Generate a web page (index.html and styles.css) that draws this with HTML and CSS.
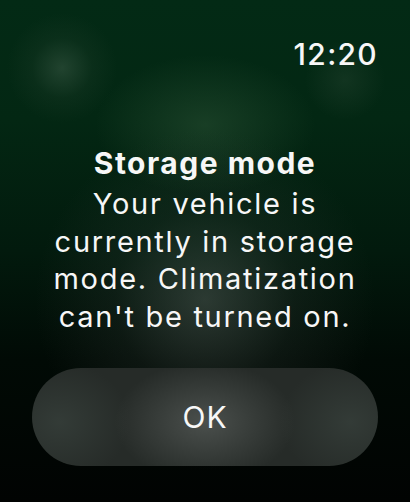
FILE: index.html
```html
<!DOCTYPE html>
<html lang="en">
<head>
    <meta charset="UTF-8">
    <meta name="viewport" content="width=device-width, initial-scale=1.0">
    <title>Storage mode</title>
    <link rel="stylesheet" href="styles.css">
</head>
<body>
    <div class="screen">
        <div class="status-bar">
            <span class="clock">12:20</span>
        </div>
        <div class="alert">
            <h1 class="alert-title">Storage mode</h1>
            <p class="alert-message">Your vehicle is currently in storage mode. Climatization can't be turned on.</p>
        </div>
        <div class="actions">
            <button class="ok-button">OK</button>
        </div>
    </div>
</body>
</html>
```

FILE: styles.css
```css
html, body {
    margin: 0;
    padding: 0;
    background-color: #010603;
}
.screen {
    width: 410px;
    height: 502px;
    overflow: hidden;
    color: #f7f7f7;
    font-family: Inter, "Noto Sans", sans-serif;
    display: flex;
    flex-direction: column;
    background:
        radial-gradient(circle at 205px 300px, rgba(95, 105, 100, 0.45) 0, rgba(60, 70, 65, 0.2) 90px, rgba(0, 0, 0, 0) 170px),
        radial-gradient(circle at 62px 68px, rgba(70, 100, 80, 0.45) 0, rgba(40, 70, 50, 0.2) 30px, rgba(0, 0, 0, 0) 55px),
        radial-gradient(ellipse 110px 70px at 205px 125px, rgba(45, 85, 55, 0.5) 0, rgba(0, 0, 0, 0) 100%),
        radial-gradient(circle at 345px 80px, rgba(45, 75, 55, 0.35) 0, rgba(0, 0, 0, 0) 40px),
        linear-gradient(180deg, #032a15 0, #032713 120px, #021a0d 250px, #010a05 360px, #010302 502px);
}
.status-bar {
    display: flex;
    justify-content: flex-end;
    padding: 39px 32px 0 0;
}
.clock {
    font-size: 30px;
    line-height: 30px;
    font-weight: 500;
    letter-spacing: 1.3px;
}
.alert {
    text-align: center;
    padding: 0 30px;
}
.alert-title {
    margin: 79px 0 0;
    font-size: 30px;
    line-height: 30px;
    font-weight: 700;
    letter-spacing: 1.5px;
}
.alert-message {
    margin: 7px 0 0;
    font-size: 29px;
    line-height: 37.5px;
    font-weight: 400;
    letter-spacing: 1.7px;
}
.actions {
    padding: 0 32px;
    margin-top: 33px;
}
.ok-button {
    width: 100%;
    height: 98px;
    border: none;
    border-radius: 49px;
    color: #f7f7f7;
    font-family: Inter, "Noto Sans", sans-serif;
    font-size: 30px;
    font-weight: 400;
    letter-spacing: 1px;
    background:
        radial-gradient(ellipse 90px 60px at 50% 55%, rgba(90, 95, 92, 0.7) 0, rgba(0, 0, 0, 0) 100%),
        radial-gradient(ellipse 70px 60px at 8% 55%, rgba(60, 70, 65, 0.6) 0, rgba(0, 0, 0, 0) 100%),
        radial-gradient(ellipse 70px 60px at 92% 55%, rgba(60, 70, 65, 0.6) 0, rgba(0, 0, 0, 0) 100%),
        #262b28;
}
```
